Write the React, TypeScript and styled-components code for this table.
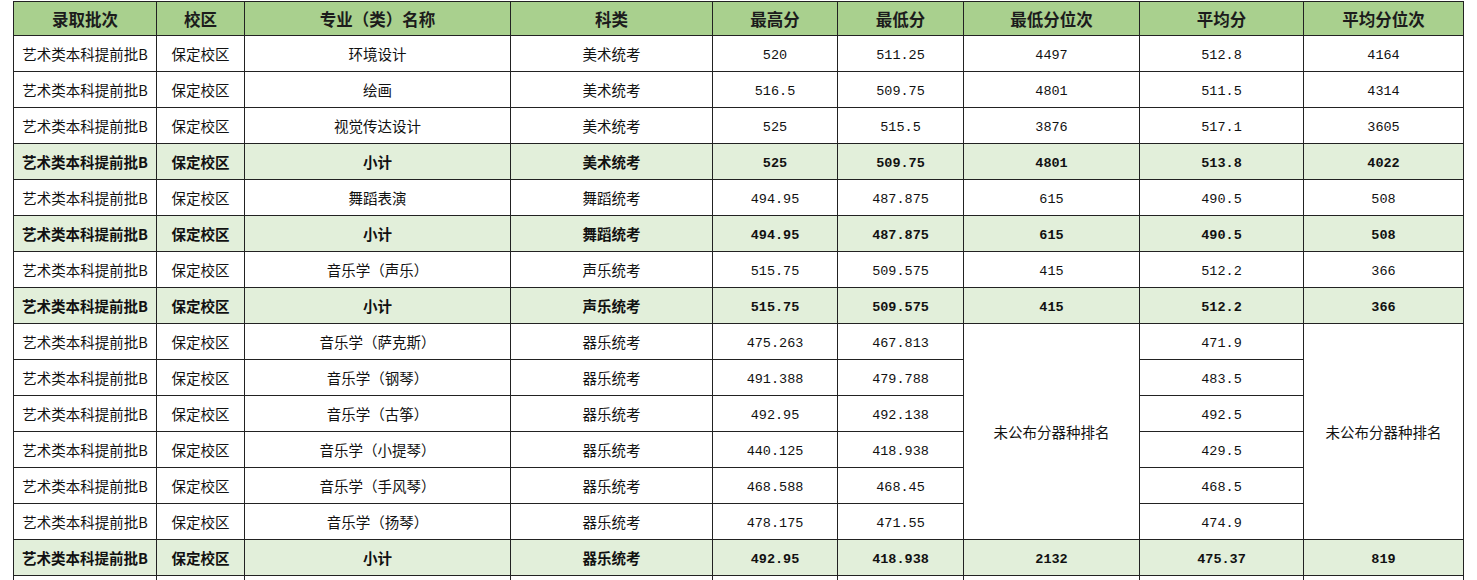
import styled, { createGlobalStyle } from "styled-components";

const GlobalStyle = createGlobalStyle`
  body {
    margin: 0;
    background: #fff;
    font-family: "Noto Sans CJK SC", "Noto Sans", sans-serif;
    color: #111;
  }
`;

const Page = styled.div`
  padding: 1px 0 0 13px;
`;

const Table = styled.table`
  border-collapse: separate;
  border-spacing: 0;
  table-layout: fixed;
  width: 1450px;
  border-top: 1px solid #222;
  border-left: 1px solid #222;
`;

const HeadRow = styled.tr`
  height: 34px;
  background: #a9d08e;
`;

const HeadCell = styled.th`
  border-right: 1px solid #222;
  border-bottom: 1px solid #222;
  padding: 0;
  font-size: 16.5px;
  font-weight: 700;
  color: #1c1c1c;
  text-align: center;
  vertical-align: middle;
`;

const Row = styled.tr<{ $subtotal?: boolean }>`
  height: 36px;
  background: ${({ $subtotal }) => ($subtotal ? "#e2efda" : "#fff")};
  font-weight: ${({ $subtotal }) => ($subtotal ? 700 : 400)};
`;

const Cell = styled.td<{ $num?: boolean }>`
  border-right: 1px solid #222;
  border-bottom: 1px solid #222;
  padding: ${({ $num }) => ($num ? "4px 0 0" : "0")};
  text-align: center;
  vertical-align: middle;
  white-space: nowrap;
  font-size: ${({ $num }) => ($num ? "13.5px" : "14.5px")};
  font-family: ${({ $num }) =>
    $num
      ? '"Liberation Mono", "DejaVu Sans Mono", monospace'
      : '"Noto Sans CJK SC", "Noto Sans", sans-serif'};
  color: #111;
`;

const widths = [143, 88, 266, 202, 125, 126, 176, 164, 160];
const headers = ["录取批次", "校区", "专业（类）名称", "科类", "最高分", "最低分", "最低分位次", "平均分", "平均分位次"];

type Item = {
  major: string;
  subject: string;
  max: string;
  min: string;
  minRank?: string;
  avg: string;
  avgRank?: string;
  subtotal?: boolean;
  mergeStart?: boolean;
};

const items: Item[] = [
  { major: "环境设计", subject: "美术统考", max: "520", min: "511.25", minRank: "4497", avg: "512.8", avgRank: "4164" },
  { major: "绘画", subject: "美术统考", max: "516.5", min: "509.75", minRank: "4801", avg: "511.5", avgRank: "4314" },
  { major: "视觉传达设计", subject: "美术统考", max: "525", min: "515.5", minRank: "3876", avg: "517.1", avgRank: "3605" },
  { major: "小计", subject: "美术统考", max: "525", min: "509.75", minRank: "4801", avg: "513.8", avgRank: "4022", subtotal: true },
  { major: "舞蹈表演", subject: "舞蹈统考", max: "494.95", min: "487.875", minRank: "615", avg: "490.5", avgRank: "508" },
  { major: "小计", subject: "舞蹈统考", max: "494.95", min: "487.875", minRank: "615", avg: "490.5", avgRank: "508", subtotal: true },
  { major: "音乐学（声乐）", subject: "声乐统考", max: "515.75", min: "509.575", minRank: "415", avg: "512.2", avgRank: "366" },
  { major: "小计", subject: "声乐统考", max: "515.75", min: "509.575", minRank: "415", avg: "512.2", avgRank: "366", subtotal: true },
  { major: "音乐学（萨克斯）", subject: "器乐统考", max: "475.263", min: "467.813", avg: "471.9", mergeStart: true },
  { major: "音乐学（钢琴）", subject: "器乐统考", max: "491.388", min: "479.788", avg: "483.5" },
  { major: "音乐学（古筝）", subject: "器乐统考", max: "492.95", min: "492.138", avg: "492.5" },
  { major: "音乐学（小提琴）", subject: "器乐统考", max: "440.125", min: "418.938", avg: "429.5" },
  { major: "音乐学（手风琴）", subject: "器乐统考", max: "468.588", min: "468.45", avg: "468.5" },
  { major: "音乐学（扬琴）", subject: "器乐统考", max: "478.175", min: "471.55", avg: "474.9" },
  { major: "小计", subject: "器乐统考", max: "492.95", min: "418.938", minRank: "2132", avg: "475.37", avgRank: "819", subtotal: true },
];

const UNPUBLISHED = "未公布分器种排名";

export default function App() {
  return (
    <Page>
      <GlobalStyle />
      <Table>
        <colgroup>
          {widths.map((w, i) => (
            <col key={i} style={{ width: w }} />
          ))}
        </colgroup>
        <thead>
          <HeadRow>
            {headers.map((h) => (
              <HeadCell key={h}>{h}</HeadCell>
            ))}
          </HeadRow>
        </thead>
        <tbody>
          {items.map((it, i) => {
            const merged = it.minRank === undefined;
            return (
              <Row key={i} $subtotal={it.subtotal}>
                <Cell>艺术类本科提前批B</Cell>
                <Cell>保定校区</Cell>
                <Cell>{it.major}</Cell>
                <Cell>{it.subject}</Cell>
                <Cell $num>{it.max}</Cell>
                <Cell $num>{it.min}</Cell>
                {!merged && <Cell $num>{it.minRank}</Cell>}
                {it.mergeStart && <Cell rowSpan={6}>{UNPUBLISHED}</Cell>}
                <Cell $num>{it.avg}</Cell>
                {!merged && <Cell $num>{it.avgRank}</Cell>}
                {it.mergeStart && <Cell rowSpan={6}>{UNPUBLISHED}</Cell>}
              </Row>
            );
          })}
          <Row>
            {widths.map((_, i) => (
              <Cell key={i} />
            ))}
          </Row>
        </tbody>
      </Table>
    </Page>
  );
}
